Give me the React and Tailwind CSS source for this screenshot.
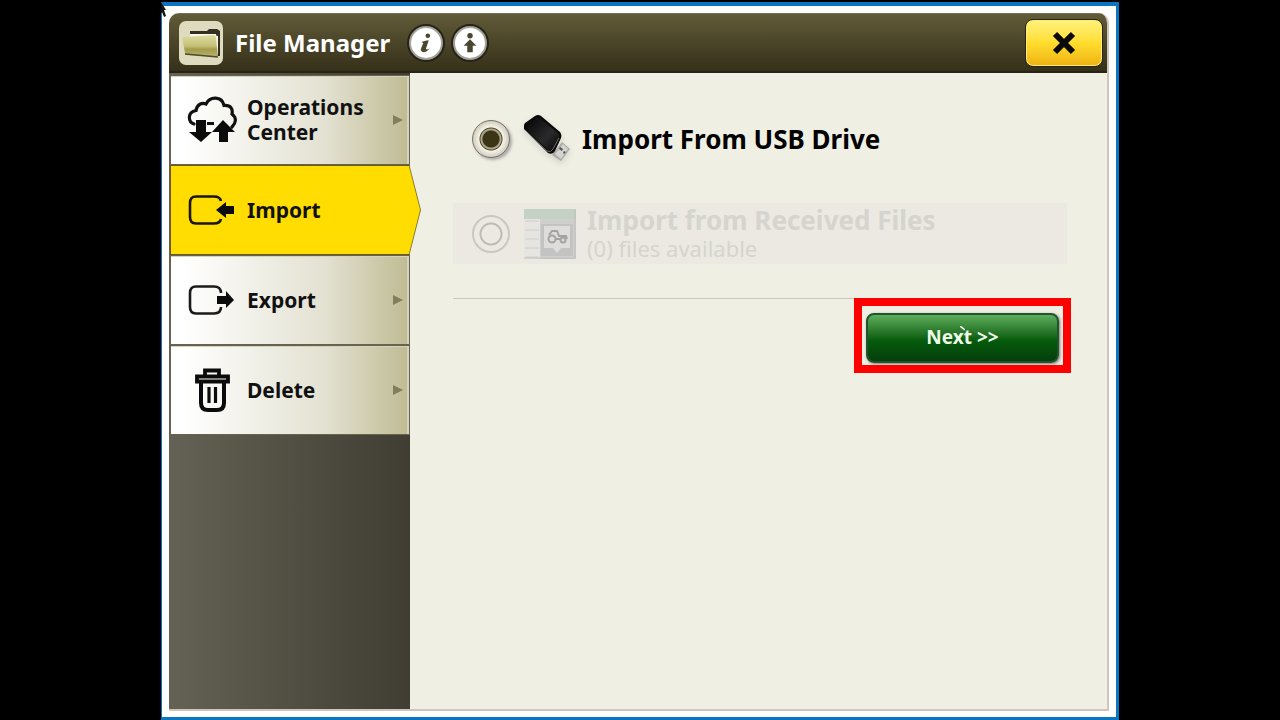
import { useState } from 'react'

function CloudIcon() {
  return (
    <svg viewBox="0 0 50 48" className="w-[50px] h-12" fill="none">
      <path
        d="M7 28 C1 26 0 16 9 14.500 C10 8 15 6.500 19 8 C23 0 35 0 37 9.500 C44 9 46 13 45 18 C50 22 49 27 45 31"
        stroke="#111"
        strokeWidth="3.200"
        strokeLinecap="round"
      />
      <path d="M20 27.500h7" stroke="#111" strokeWidth="3" />
      <path d="M9 24h10v12h6L14 46 2 36h7z" fill="#0b0b0b" />
      <path d="M36 24l12 12h-7v10h-9V36h-7z" fill="#0b0b0b" />
    </svg>
  )
}

function ImportIcon() {
  return (
    <svg viewBox="0 0 50 48" className="w-[50px] h-12" fill="none">
      <path
        d="M34 15 Q33 10.500 27 10.500 H9 Q3 10.500 3 17 V31 Q3 37.500 9 37.500 H27 Q33 37.500 34 33"
        stroke="#1b1508"
        strokeWidth="2.600"
      />
      <path d="M29 24l10-8v4h8v8h-8v4z" fill="#0b0b0b" />
    </svg>
  )
}

function ExportIcon() {
  return (
    <svg viewBox="0 0 50 48" className="w-[50px] h-12" fill="none">
      <path
        d="M34 17 Q34 10.500 27 10.500 H9 Q3 10.500 3 17 V31 Q3 37.500 9 37.500 H27 Q34 37.500 34 31"
        stroke="#1b1b1b"
        strokeWidth="2.600"
      />
      <path d="M30 20h9v-5l8 9-8 8v-4h-9z" fill="#0b0b0b" />
    </svg>
  )
}

function TrashIcon() {
  return (
    <svg viewBox="0 0 50 48" className="w-[50px] h-12" fill="none" stroke="#0b0b0b">
      <path d="M18 9V4.500h14V9" strokeWidth="3.800" />
      <path d="M10 10.500h31v5H10z" strokeWidth="3.800" />
      <path d="M14 16v21q0 7 7 7h9q7 0 7-7V16" strokeWidth="4" />
      <path d="M22 21v16M28.500 21v16" strokeWidth="3.200" />
    </svg>
  )
}

function FolderIcon() {
  return (
    <svg viewBox="0 0 44 44" className="size-11">
      <defs>
        <linearGradient id="folder" x1="0" y1="0" x2="0" y2="1">
          <stop offset="0" stopColor="#dddda0" />
          <stop offset="0.5" stopColor="#c6c178" />
          <stop offset="0.65" stopColor="#a29c4c" />
          <stop offset="1" stopColor="#bbb16c" />
        </linearGradient>
      </defs>
      <rect width="44" height="44" rx="7" fill="#dedbbf" />
      <path d="M11 10h17l2-2h8l3 2v25h-4V14H11z" fill="#333022" />
      <path d="M11 13h26l2 22-3-16-25-3z" fill="#f8f7ea" />
      <path d="M35 14l4 1v19l-3-4z" fill="#f3f1e4" />
      <path d="M3 16l31-2q3 0 3 3l2 19-32-2q-1 0-1-2z" fill="url(#folder)" />
      <path d="M6 33l33 3" stroke="#4f4a2c" strokeWidth="1.500" />
    </svg>
  )
}

function UsbIcon() {
  return (
    <svg viewBox="0 0 50 50" className="size-[50px] shrink-0 drop-shadow-md">
      <defs>
        <linearGradient id="usb" x1="0" y1="0" x2="1" y2="1">
          <stop offset="0" stopColor="#050505" />
          <stop offset="0.6" stopColor="#292929" />
          <stop offset="1" stopColor="#080808" />
        </linearGradient>
      </defs>
      <path d="M28 41l10-13 8 7-9 12z" fill="#a9a9a5" />
      <path d="M31 40l8-10 5 5-7 10z" fill="#d3d3cf" />
      <path d="M36 33l3 2-1 2-3-2zM40 37l2 1-2 2-1-1z" fill="#555" />
      <path d="M0 15Q-1 12 1 9L11 2q3-2 6 0l19 16q2 2 1 6l-6 13q-2 4-7 2z" fill="#090909" />
      <path d="M3 11l9-7q2-1 4 0l19 16q1 2 0 4l-6 11q-2 2-5 1L4 17q-2-3-1-6z" fill="url(#usb)" />
      <path d="M2 17l21 20q4 2 6-2l6-11" fill="none" stroke="#888" strokeWidth="0.800" />
    </svg>
  )
}

function ReceivedIcon() {
  return (
    <svg viewBox="0 0 52 50" className="w-[52px] h-[50px] shrink-0">
      <rect width="52" height="50" fill="#cfcfcc" />
      <rect width="52" height="10" fill="#c3d2c2" />
      <rect y="10" width="16" height="40" fill="#e7e5e2" />
      <path d="M1 12h14M1 21h14M1 30h14M1 39h14M1 48h14" stroke="#d0cecb" />
      <rect x="17" y="15" width="32" height="32" fill="#c3c3c3" />
      <path d="M20 17h26v22h-9l-4 5-4-5h-9z" fill="#dedddb" />
      <g fill="none" stroke="#a3a3a1" strokeWidth="2">
        <circle cx="28" cy="30" r="3.500" />
        <circle cx="39" cy="31" r="2.500" />
        <path d="M25 26l3-4h5l2 5h7l1 3M32 30h5" />
      </g>
      <path d="M51 0v49H0" fill="none" stroke="#bfbebb" />
    </svg>
  )
}

const items = [
  { id: 'operations', label: 'Operations Center', Icon: CloudIcon },
  { id: 'import', label: 'Import', Icon: ImportIcon },
  { id: 'export', label: 'Export', Icon: ExportIcon },
  { id: 'delete', label: 'Delete', Icon: TrashIcon },
]

function SideItem({ item, active, onClick }) {
  const { Icon, label } = item
  return (
    <button
      type="button"
      onClick={onClick}
      className={`relative flex items-center w-full h-[90px] pl-4 pr-[6px] border text-left ${
        active
          ? 'bg-[#ffdd00] border-[#6a5a20]'
          : 'bg-linear-to-r from-white from-5% via-[#e3e1d1] via-65% to-[#bfbb93] border-[#67634f] shadow-[inset_-2px_1px_0_#d6d3bd]'
      }`}
    >
      <Icon />
      <span className="flex-1 ml-[10px] text-[21px] leading-[25px] font-bold text-[#111]">{label}</span>
      {active ? (
        <svg viewBox="0 0 12 90" preserveAspectRatio="none" className="absolute left-full -top-px w-3 h-[90px]">
          <path d="M0 0L11.500 45L0 90" fill="#ffdd00" stroke="#8a7d35" />
        </svg>
      ) : (
        <svg viewBox="0 0 10 10" className="size-[10px]">
          <path d="M0 0l10 5-10 5z" fill="#827d5c" />
        </svg>
      )}
    </button>
  )
}

const roundButton =
  'flex items-center justify-center size-[34px] rounded-full bg-white border-2 border-[#a3a196] shadow-[0_0_0_2px_#25221a]'

export default function App() {
  const [page, setPage] = useState('import')
  const [source, setSource] = useState('usb')

  return (
    <div className="min-h-screen bg-black pt-[2px] flex font-['Noto_Sans','Open_Sans',sans-serif]">
      <div className="relative flex w-full max-w-[958px] mx-auto bg-white border-l border-r-3 border-t-4 border-b-3 border-[#0a75c2] pt-[7px] pr-[7px] pb-[6px] pl-[7px]">
        <svg viewBox="0 0 6 16" className="absolute -left-px -top-1 w-[6px] h-4">
          <path d="M0 0l5 8H3l2 6-2 1-2-5-1 1z" fill="#111" />
        </svg>

        <div className="flex flex-col flex-1 rounded-t-[10px] bg-[#f0efe3] border-r-2 border-b-2 border-[#cfc5b8] overflow-hidden">
          <header className="flex items-center h-[60px] pl-[10px] pr-1 bg-linear-to-b from-[#625b39] to-[#353019] border-t border-b-2 border-t-[#77715a] border-b-[#28240f]">
            <FolderIcon />
            <h1 className="ml-3 text-2xl font-bold text-white">File Manager</h1>
            <button type="button" aria-label="Information" className={`${roundButton} ml-[19px]`}>
              <svg viewBox="0 0 24 24" className="size-[22px]" fill="#4b472e">
                <circle cx="14" cy="4" r="2.500" />
                <path d="M7 11q5-2 8-2l-3 9q0 2 4 0-3 4-7 4-4-1-2-5l2-5z" />
              </svg>
            </button>
            <button type="button" aria-label="Upload" className={`${roundButton} ml-[10px]`}>
              <svg viewBox="0 0 24 24" className="size-[22px]" fill="#4b472e">
                <circle cx="12" cy="4" r="3" />
                <path d="M12 8l7 7h-4v7H9v-7H5z" />
              </svg>
            </button>
            <button
              type="button"
              aria-label="Close"
              className="flex items-center justify-center ml-auto w-[78px] h-12 rounded-lg border border-[#2b220a] bg-linear-to-b from-[#fff27a] via-[#ffdd2c] to-[#eeb111] shadow-[inset_0_0_0_1px_#ffec74]"
            >
              <svg viewBox="0 0 24 24" className="size-6" stroke="#0a0a0a" strokeWidth="6">
                <path d="M3 3l18 18M21 3L3 21" />
              </svg>
            </button>
          </header>

          <div className="flex flex-1">
            <nav className="w-[241px] shrink-0 pt-[2px] pl-px bg-linear-to-r from-[#646255] to-[#403d32]">
              {items.map((item) => (
                <SideItem
                  key={item.id}
                  item={item}
                  active={page === item.id}
                  onClick={() => setPage(item.id)}
                />
              ))}
            </nav>

            <main className="flex-1 pt-9 pl-[43px] pr-10">
              <label className="flex items-center h-[60px] pl-[19px]">
                <input
                  type="radio"
                  name="source"
                  checked={source === 'usb'}
                  onChange={() => setSource('usb')}
                  className="appearance-none size-[38px] shrink-0 rounded-full border border-[#77736a] bg-[#e6e3d6] checked:bg-[radial-gradient(circle,#3c3417_0_8px,#a49c7c_9px,#b5ae94_10px,#4c452c_11px,#f5f3e8_12px,#d2cebd_18px)] shadow-[2px_2px_3px_#aaa]"
                />
                <span className="ml-[14px] w-[58px]">
                  <UsbIcon />
                </span>
                <span className="text-[26px] leading-8 font-bold text-black">Import From USB Drive</span>
              </label>

              <label className="flex items-center h-[61px] mt-[34px] pl-[19px] bg-[#ebe9e1]">
                <input
                  type="radio"
                  name="source"
                  disabled
                  className="appearance-none size-[38px] shrink-0 rounded-full border-2 border-[#c9c7c1] bg-[radial-gradient(circle,#ebe9e1_0_9px,#bdbbb5_10px,#bdbbb5_11px,#ebe9e1_12px)]"
                />
                <span className="ml-[14px] w-[63px]">
                  <ReceivedIcon />
                </span>
                <span className="flex flex-col text-[#d6d4ce]">
                  <span className="text-[26px] leading-7 font-bold">Import from Received Files</span>
                  <span className="text-[22px] leading-7">(0) files available</span>
                </span>
              </label>

              <hr className="mt-[34px] border-[#cbc6bb]" />

              <div className="flex justify-end mt-[14px] pr-2">
                <div className="relative">
                  <span className="absolute -inset-x-3 -top-[15px] -bottom-[10px] border-8 border-[#ff0000] pointer-events-none" />
                  <button
                    type="button"
                    className="w-[193px] h-[50px] pb-[2px] rounded-lg border-2 border-[#20542c] bg-linear-to-b from-[#5cae5c] from-0% via-[#055c0c] via-55% to-[#043e0b] text-[19px] font-bold text-[#eefbe9] shadow-[1px_1px_3px_#777]"
                  >
                    Next &gt;&gt;
                  </button>
                  <svg viewBox="0 0 5 5" className="absolute left-[94px] top-[13px] size-[5px]">
                    <path d="M0 0l5 4" stroke="#fff" strokeWidth="1.500" />
                  </svg>
                </div>
              </div>
            </main>
          </div>
        </div>
      </div>
    </div>
  )
}
